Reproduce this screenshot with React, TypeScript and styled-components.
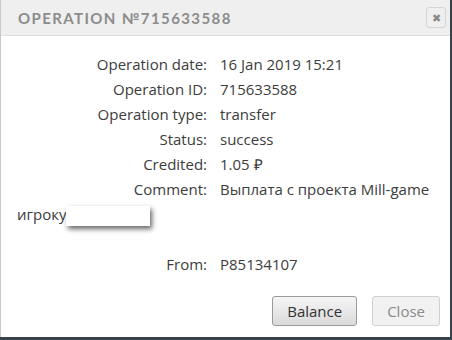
import React from "react";
import styled, { createGlobalStyle } from "styled-components";

const GlobalStyle = createGlobalStyle`
  html, body {
    margin: 0;
    padding: 0;
    background: #36424a;
  }
  body {
    font-family: "Open Sans", "Liberation Sans", sans-serif;
  }
`;

const rows: [string, React.ReactNode][] = [
  ["Operation date:", "16 Jan 2019 15:21"],
  ["Operation ID:", "715633588"],
  ["Operation type:", "transfer"],
  ["Status:", "success"],
  ["Credited:", "1.05 ₽"],
];

function App() {
  return (
    <>
      <GlobalStyle />
      <Dialog>
        <Header>
          <Title>OPERATION №715633588</Title>
          <CloseX>✖</CloseX>
        </Header>
        <Body>
          {rows.map(([label, value]) => (
            <Row key={label}>
              <Label>{label}</Label>
              <Value>{value}</Value>
            </Row>
          ))}
          <Row>
            <Label>Comment:</Label>
            <Value>
              Выплата с проекта Mill-game игроку<Hidden />
            </Value>
          </Row>
          <Row $gap>
            <Label>From:</Label>
            <Value>P85134107</Value>
          </Row>
        </Body>
        <Footer>
          <Button>Balance</Button>
          <Button $muted>Close</Button>
        </Footer>
      </Dialog>
    </>
  );
}

const Dialog = styled.div`
  width: 450px;
  height: 337px;
  box-sizing: border-box;
  background: #fff;
  border-left: 1px solid #c8c8c8;
  display: flex;
  flex-direction: column;
`;

const Header = styled.div`
  height: 36px;
  box-sizing: border-box;
  background: #efefef;
  border-bottom: 1px solid #dedede;
  display: flex;
  align-items: center;
  justify-content: space-between;
  padding: 0 4px 0 17px;
`;

const Title = styled.div`
  font-family: "Lato", sans-serif;
  font-weight: bold;
  font-size: 15px;
  letter-spacing: 1.4px;
  color: #8c8c8c;
`;

const CloseX = styled.div`
  width: 18px;
  height: 19px;
  border: 1px solid #d4d4d4;
  border-radius: 3px;
  display: flex;
  align-items: center;
  justify-content: center;
  font-size: 11px;
  color: #8a8a8a;
`;

const Body = styled.div`
  flex: 1;
  padding: 16px 17px 0 16px;
  font-size: 15px;
  line-height: 25px;
  color: #3c3c3c;
`;

const Row = styled.div<{ $gap?: boolean }>`
  margin-top: ${(p) => (p.$gap ? "25px" : "0")};
`;

const Label = styled.span`
  display: inline-block;
  width: 190px;
  text-align: right;
  margin-right: 13px;
`;

const Value = styled.span``;

const Hidden = styled.span`
  display: inline-block;
  width: 84px;
  height: 20px;
  background: #fff;
  vertical-align: middle;
  box-shadow: 2px 3px 5px rgba(0, 0, 0, 0.6);
`;

const Footer = styled.div`
  display: flex;
  justify-content: flex-end;
  gap: 15px;
  padding: 0 10px 11px 0;
`;

const Button = styled.div<{ $muted?: boolean }>`
  height: 30px;
  box-sizing: border-box;
  padding: 0 14px;
  display: flex;
  align-items: center;
  font-size: 15px;
  border-radius: 3px;
  border: 1px solid ${(p) => (p.$muted ? "#d0d0d0" : "#9a9a9a")};
  color: ${(p) => (p.$muted ? "#8a8a8a" : "#333")};
  background: ${(p) =>
    p.$muted ? "#f1f1f1" : "linear-gradient(#f6f6f6, #dadada)"};
`;

export default App;
